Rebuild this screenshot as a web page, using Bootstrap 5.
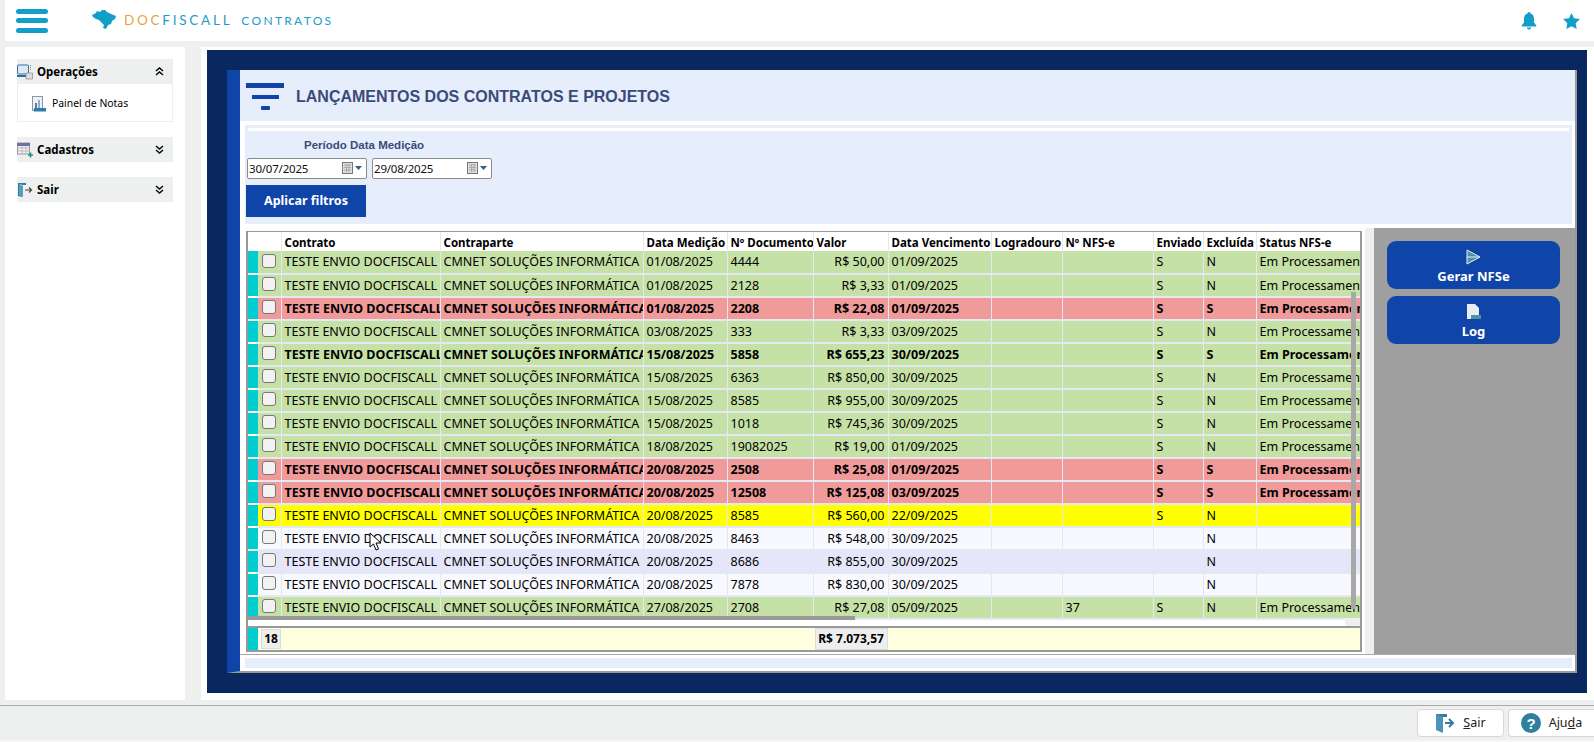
<!DOCTYPE html>
<html lang="pt-BR">
<head>
<meta charset="utf-8">
<title>Contratos</title>
<link href="https://cdn.jsdelivr.net/npm/bootstrap@5.3.0/dist/css/bootstrap.min.css" rel="stylesheet">
<style>
html,body{height:742px;overflow:hidden}
body{background:#eef0ef;font-family:"Noto Sans","Liberation Sans",sans-serif;color:#000}
.topbar{height:41px;margin-left:5px;background:#fff;padding-left:11px}
.burger{width:32px;display:flex;flex-direction:column;gap:4.5px}
.burger i{display:block;height:5px;border-radius:3px;background:#119fc9}
.brandmap{margin-left:44px;margin-top:-3px}
.brand{font-family:"Lato","Open Sans",sans-serif;font-size:13.5px;letter-spacing:2.75px;margin-left:8px;color:#1d9cc8}
.brand b{font-weight:400;color:#e8a33d}
.brand2{margin-left:9px;font-size:12px;letter-spacing:2.3px}
.topicons{margin-left:auto;padding-right:14px;gap:26px}
.midrow{height:664px;padding:6px 0 0 5px;gap:16px}
.sidebar{width:180px;height:653px;background:#fff;padding:12px 12px 0}
.sidehead{height:25px;background:#eef0ef;font-weight:700;font-size:11.5px;padding:0 9px 0 0;gap:4px}
.sidehead .chev{margin-left:auto}
.sidebody{height:38px;border:1px solid #eef0ef;border-top:0;padding:2px 0 0 14px;font-size:10.4px;gap:6px;margin-bottom:15px}
.sidegap{margin-top:15px}
.contentw{flex:1;background:#fff;padding:3px 7px 7px 6px;height:653px}
.navyp{height:643px;background:#0a275f;padding:20px 10px 20px 20px}
.innerp{height:603px;background:#fff;border-left:13px solid #0f44a8;border-right:2px solid #999;border-bottom:2px solid #999}
.titleb{height:51px;background:#e6eefb;padding:2px 0 0 6px;gap:12px}
.titleb svg{flex:none}
.titleb h1{margin:0;font-family:"Liberation Sans",sans-serif;font-weight:700;font-size:16px;color:#3b4a7a;padding-top:0}
.filterb{height:99px;margin:4px 3px 0 5px;background:#e6eefb;padding-top:3px}
.filterb .wline{height:3px;background:#fff;margin:0 3px}
.flabel{font-family:"Liberation Sans",sans-serif;font-weight:700;font-size:11.5px;color:#3b4a7a;margin:6px 0 0 59px;height:21px;line-height:14px;padding-top:1px}
.datesr{gap:5px;padding-left:2px}
.datebox{width:120px;height:21px;border:1px solid #8a8a8a;border-radius:2px;background:#fff;padding:0 4px 0 1px;font-size:11.5px;letter-spacing:-.2px;line-height:19px;min-height:0;color:#111}
.datebox svg{margin-left:auto}
.applyb{width:120px;height:32px;margin:6px 0 0 1px;padding:0;background:#0f44a8;border:0;border-radius:0;color:#fff;font-weight:700;font-size:12.5px}
.workr{height:426px;margin-top:4px;padding-left:6px}
.gridbox{width:1116px;height:421px;margin-top:3px;border:2px solid #999;border-top-width:1px;background:#fff;position:relative}
.gridsc{height:396px;overflow:hidden;background:#fff;border-bottom:2px solid #999}
.grid-t{table-layout:fixed;width:1112px;margin:0;font-size:12.5px}
.grid-t>:not(caption)>*>*{padding:0 0 1px 3px;height:23px;white-space:nowrap;overflow:hidden;border:0;border-right:1px solid #e4e8f2;border-bottom:2px solid #e4e8f2;line-height:19px;color:#000;vertical-align:middle}
.grid-t>thead>*>*{height:19px;font-size:11.5px;font-weight:700;line-height:17px;border-bottom:0;padding:1px 0 0 3px}
.grid-t td.tealc,.grid-t>thead th.tealh{padding:0;border-right:0}
.grid-t td.tealc{--bs-table-bg:#00ced1;border-bottom:2px solid #fff;border-right:0}
.grid-t td.chkc{padding:0;text-align:center}
.grid-t td.valc{text-align:right;padding-right:3px;padding-left:0}
.grid-t .form-check-input{width:14px;height:14px;margin:0;border:1px solid #777;border-radius:3px;background-color:#f2f2f2;vertical-align:-1px;display:inline-block}
.rg{--bs-table-bg:#c6e1a6}.rr{--bs-table-bg:#f09a9a}.ry{--bs-table-bg:#ffff00}.rw{--bs-table-bg:#f8f8ff}.rl{--bs-table-bg:#e6e6fa}
.rb td{font-weight:700}
.sbv{position:absolute;left:1103px;top:60px;width:5px;height:317px;background:#a8a8a8}
.sbh{position:absolute;left:0;top:384px;width:607px;height:4px;background:#999}
.sbhtrack{position:absolute;left:1097px;top:386px;width:15px;height:8px;background:#eef0ef}
.cursorp{position:absolute;left:121px;top:300px}
.gridfoot{height:22px;background:#ffffe0;font-size:12px;font-weight:700;position:relative}
.ftl{width:10px;background:#00ced1;flex:none}
.fcount{width:20px;margin:1px 0 1px 3px;background:#eee;border:1px solid #ddd;text-align:center;line-height:18px}
.ftotal{width:73px;margin:0 0 0 534px;background:#eee;border:1px solid #ddd;text-align:right;line-height:19px;padding-right:3px;white-space:nowrap}
.gutterp{width:12px;background:#eef0ef;height:426px;border-left:3px solid #fff}
.graypan{flex:1;background:#9f9f9f;padding:13px 15px 0 13px;height:426px}
.actb{height:48px;width:173px;background:#0f44a8;border:0;border-radius:9px;color:#fff;font-weight:700;font-size:13px;padding:4px 0 0;margin-bottom:7px;line-height:18px;--bs-btn-hover-bg:#0f44a8;--bs-btn-hover-color:#fff}
.actb svg{display:block;margin:0 auto 2px}
.botl{height:1px;background:#aaa}
.band{height:10px;background:#e6eefb;margin:3px 3px 0 5px}
.botbar{height:37px;border-top:1px solid #aaa;border-bottom:2px solid #f6f6f6;padding:3px 0 0 0;justify-content:flex-end;gap:4px}
.botb{height:28px;background:#fff;border:1px solid #d8d8d8;border-radius:4px;font-size:12.5px;padding:0;gap:8px;color:#222}
.botb.b1{width:87px}.botb.b2{width:86px;border-right:0;border-radius:4px 0 0 4px}
</style>
</head>
<body>
<header class="topbar d-flex align-items-center">
  <div class="burger"><i></i><i></i><i></i></div>
  <svg class="brandmap" width="24" height="20" viewBox="0 0 24 20"><path fill="#119fc9" d="M0 6 4 4 5 2 8 3 10 1 13 1 15 3 19 5 24 7 23 10 20 12 19 15 16 16 14 20 11 19 12 16 9 13 7 11 4 10 1 8Z"/></svg>
  <div class="brand"><b>DOC</b>FISCALL</div>
  <div class="brand brand2">CONTRATOS</div>
  <div class="topicons d-flex align-items-center">
    <svg width="16" height="18" viewBox="0 0 16 18"><path fill="#119fc9" d="M8 0a1.600 1.600 0 0 1 1.500 1.600C12 2.300 13 4.400 13 7v3.500l2.300 3v1H.7v-1l2.300-3V7c0-2.600 1-4.700 3.500-5.400A1.600 1.600 0 0 1 8 0ZM5.800 15.500h4.400A2.200 2.200 0 0 1 8 17.600a2.200 2.200 0 0 1-2.200-2.100Z"/></svg>
    <svg width="17" height="16" viewBox="0 0 17 16"><path fill="#119fc9" d="M8.500 0l2.500 5.300 6 .8-4.300 4.100 1 5.800-5.200-2.800L3.300 16l1-5.800L0 6.100l6-.8Z"/></svg>
  </div>
</header>

<div class="midrow d-flex">
  <nav class="sidebar">
    <div class="sidehead d-flex align-items-center">
      <svg width="16" height="16" viewBox="0 0 16 16"><rect x=".5" y="1" width="11" height="9" rx="1" fill="#dfe8f2" stroke="#3b6ea5"/><rect x="0" y="11" width="11" height="2" fill="#2f6d97"/><rect x="9" y="9" width="6.500" height="6" fill="#ddd" stroke="#888" stroke-width=".7"/><path d="M13.500 1v6" stroke="#999" stroke-dasharray="1 1"/></svg>
      <span>Operações</span>
      <svg class="chev" width="9" height="9" viewBox="0 0 9 9"><path d="M1 4 4.500 1 8 4M1 8l3.500-3L8 8" fill="none" stroke="#000" stroke-width="1.400"/></svg>
    </div>
    <div class="sidebody d-flex align-items-center">
      <svg width="14" height="16" viewBox="0 0 14 16"><rect x=".5" y=".5" width="10" height="14" fill="#eef2f6" stroke="#8a97a5"/><rect x="3" y="7" width="2" height="5" fill="#4c86ad"/><rect x="6" y="4" width="2" height="8" fill="#8fb0c6"/><rect x="2" y="12" width="12" height="3.500" fill="#2f7ca5"/></svg>
      <span>Painel de Notas</span>
    </div>
    <div class="sidehead d-flex align-items-center">
      <svg width="16" height="16" viewBox="0 0 16 16"><rect x=".5" y="1" width="12" height="11" fill="#f2f2f2" stroke="#999"/><rect x="0" y="1" width="13" height="3" fill="#6f6fa0"/><path d="M1 6h11M1 9h11M5 4v8M9 4v8" stroke="#bbb"/><path d="M11 13h5M13.500 10.500v5" stroke="#0e9e7d" stroke-width="1.600"/></svg>
      <span>Cadastros</span>
      <svg class="chev" width="9" height="9" viewBox="0 0 9 9"><path d="M1 1l3.500 3L8 1M1 5l3.500 3L8 5" fill="none" stroke="#000" stroke-width="1.400"/></svg>
    </div>
    <div class="sidehead d-flex align-items-center sidegap">
      <svg width="16" height="16" viewBox="0 0 16 16"><path fill="#2f7ca5" d="M1 1h8v2H5L3 2v11l2 1v1L1 14Z"/><path fill="#5a9cc0" d="M2 2l4 2v11l-4-2Z"/><path d="M8 8h6M12 5.500 14.500 8 12 10.500" fill="none" stroke="#444" stroke-width="1.200"/></svg>
      <span>Sair</span>
      <svg class="chev" width="9" height="9" viewBox="0 0 9 9"><path d="M1 1l3.500 3L8 1M1 5l3.500 3L8 5" fill="none" stroke="#000" stroke-width="1.400"/></svg>
    </div>
  </nav>

  <main class="contentw">
    <div class="navyp">
      <div class="innerp">
        <div class="titleb d-flex align-items-center">
          <svg width="38" height="30" viewBox="0 0 38 30"><rect width="38" height="5" y="1" fill="#0f44a8"/><rect x="6" y="13" width="27" height="4" fill="#0f44a8"/><rect x="15" y="24" width="9" height="4" rx="1" fill="#0f44a8"/></svg>
          <h1>LANÇAMENTOS DOS CONTRATOS E PROJETOS</h1>
        </div>
        <section class="filterb">
          <div class="wline"></div>
          <div class="flabel">Período Data Medição</div>
          <div class="datesr d-flex">
            <div class="datebox d-flex align-items-center"><span>30/07/2025</span><svg width="20" height="13" viewBox="0 0 20 13"><rect x=".5" y=".5" width="10" height="11" fill="#ddd" stroke="#777"/><path d="M2 3h7M2 5.500h7M2 8h7M4.500 2v8M7 2v8" stroke="#aaa"/><path d="M13 4h7l-3.500 4Z" fill="#3c5a86"/></svg></div>
            <div class="datebox d-flex align-items-center"><span>29/08/2025</span><svg width="20" height="13" viewBox="0 0 20 13"><rect x=".5" y=".5" width="10" height="11" fill="#ddd" stroke="#777"/><path d="M2 3h7M2 5.500h7M2 8h7M4.500 2v8M7 2v8" stroke="#aaa"/><path d="M13 4h7l-3.500 4Z" fill="#3c5a86"/></svg></div>
          </div>
          <button class="btn applyb" type="button">Aplicar filtros</button>
        </section>

        <div class="workr d-flex">
          <div class="gridbox">
            <div class="gridsc">
              <table class="table grid-t">
                <colgroup><col style="width:10px"><col style="width:23px"><col style="width:159px"><col style="width:203px"><col style="width:84px"><col style="width:86px"><col style="width:75px"><col style="width:103px"><col style="width:71px"><col style="width:91px"><col style="width:50px"><col style="width:53px"><col style="width:104px"></colgroup>
                <thead><tr><th class="tealh"></th><th></th><th>Contrato</th><th>Contraparte</th><th>Data Medição</th><th>Nº Documento</th><th>Valor</th><th>Data Vencimento</th><th>Logradouro</th><th>Nº NFS-e</th><th>Enviado</th><th>Excluída</th><th>Status NFS-e</th></tr></thead>
                <tbody>
                  <tr class="rg"><td class="tealc"></td><td class="chkc"><input class="form-check-input" type="checkbox"></td><td>TESTE ENVIO DOCFISCALL</td><td>CMNET SOLUÇÕES INFORMÁTICA</td><td>01/08/2025</td><td>4444</td><td class="valc">R$ 50,00</td><td>01/09/2025</td><td></td><td></td><td>S</td><td>N</td><td>Em Processamento</td></tr>
                  <tr class="rg"><td class="tealc"></td><td class="chkc"><input class="form-check-input" type="checkbox"></td><td>TESTE ENVIO DOCFISCALL</td><td>CMNET SOLUÇÕES INFORMÁTICA</td><td>01/08/2025</td><td>2128</td><td class="valc">R$ 3,33</td><td>01/09/2025</td><td></td><td></td><td>S</td><td>N</td><td>Em Processamento</td></tr>
                  <tr class="rr rb"><td class="tealc"></td><td class="chkc"><input class="form-check-input" type="checkbox"></td><td>TESTE ENVIO DOCFISCALL</td><td>CMNET SOLUÇÕES INFORMÁTICA</td><td>01/08/2025</td><td>2208</td><td class="valc">R$ 22,08</td><td>01/09/2025</td><td></td><td></td><td>S</td><td>S</td><td>Em Processamento</td></tr>
                  <tr class="rg"><td class="tealc"></td><td class="chkc"><input class="form-check-input" type="checkbox"></td><td>TESTE ENVIO DOCFISCALL</td><td>CMNET SOLUÇÕES INFORMÁTICA</td><td>03/08/2025</td><td>333</td><td class="valc">R$ 3,33</td><td>03/09/2025</td><td></td><td></td><td>S</td><td>N</td><td>Em Processamento</td></tr>
                  <tr class="rg rb"><td class="tealc"></td><td class="chkc"><input class="form-check-input" type="checkbox"></td><td>TESTE ENVIO DOCFISCALL</td><td>CMNET SOLUÇÕES INFORMÁTICA</td><td>15/08/2025</td><td>5858</td><td class="valc">R$ 655,23</td><td>30/09/2025</td><td></td><td></td><td>S</td><td>S</td><td>Em Processamento</td></tr>
                  <tr class="rg"><td class="tealc"></td><td class="chkc"><input class="form-check-input" type="checkbox"></td><td>TESTE ENVIO DOCFISCALL</td><td>CMNET SOLUÇÕES INFORMÁTICA</td><td>15/08/2025</td><td>6363</td><td class="valc">R$ 850,00</td><td>30/09/2025</td><td></td><td></td><td>S</td><td>N</td><td>Em Processamento</td></tr>
                  <tr class="rg"><td class="tealc"></td><td class="chkc"><input class="form-check-input" type="checkbox"></td><td>TESTE ENVIO DOCFISCALL</td><td>CMNET SOLUÇÕES INFORMÁTICA</td><td>15/08/2025</td><td>8585</td><td class="valc">R$ 955,00</td><td>30/09/2025</td><td></td><td></td><td>S</td><td>N</td><td>Em Processamento</td></tr>
                  <tr class="rg"><td class="tealc"></td><td class="chkc"><input class="form-check-input" type="checkbox"></td><td>TESTE ENVIO DOCFISCALL</td><td>CMNET SOLUÇÕES INFORMÁTICA</td><td>15/08/2025</td><td>1018</td><td class="valc">R$ 745,36</td><td>30/09/2025</td><td></td><td></td><td>S</td><td>N</td><td>Em Processamento</td></tr>
                  <tr class="rg"><td class="tealc"></td><td class="chkc"><input class="form-check-input" type="checkbox"></td><td>TESTE ENVIO DOCFISCALL</td><td>CMNET SOLUÇÕES INFORMÁTICA</td><td>18/08/2025</td><td>19082025</td><td class="valc">R$ 19,00</td><td>01/09/2025</td><td></td><td></td><td>S</td><td>N</td><td>Em Processamento</td></tr>
                  <tr class="rr rb"><td class="tealc"></td><td class="chkc"><input class="form-check-input" type="checkbox"></td><td>TESTE ENVIO DOCFISCALL</td><td>CMNET SOLUÇÕES INFORMÁTICA</td><td>20/08/2025</td><td>2508</td><td class="valc">R$ 25,08</td><td>01/09/2025</td><td></td><td></td><td>S</td><td>S</td><td>Em Processamento</td></tr>
                  <tr class="rr rb"><td class="tealc"></td><td class="chkc"><input class="form-check-input" type="checkbox"></td><td>TESTE ENVIO DOCFISCALL</td><td>CMNET SOLUÇÕES INFORMÁTICA</td><td>20/08/2025</td><td>12508</td><td class="valc">R$ 125,08</td><td>03/09/2025</td><td></td><td></td><td>S</td><td>S</td><td>Em Processamento</td></tr>
                  <tr class="ry"><td class="tealc"></td><td class="chkc"><input class="form-check-input" type="checkbox"></td><td>TESTE ENVIO DOCFISCALL</td><td>CMNET SOLUÇÕES INFORMÁTICA</td><td>20/08/2025</td><td>8585</td><td class="valc">R$ 560,00</td><td>22/09/2025</td><td></td><td></td><td>S</td><td>N</td><td></td></tr>
                  <tr class="rw"><td class="tealc"></td><td class="chkc"><input class="form-check-input" type="checkbox"></td><td>TESTE ENVIO DOCFISCALL</td><td>CMNET SOLUÇÕES INFORMÁTICA</td><td>20/08/2025</td><td>8463</td><td class="valc">R$ 548,00</td><td>30/09/2025</td><td></td><td></td><td></td><td>N</td><td></td></tr>
                  <tr class="rl"><td class="tealc"></td><td class="chkc"><input class="form-check-input" type="checkbox"></td><td>TESTE ENVIO DOCFISCALL</td><td>CMNET SOLUÇÕES INFORMÁTICA</td><td>20/08/2025</td><td>8686</td><td class="valc">R$ 855,00</td><td>30/09/2025</td><td></td><td></td><td></td><td>N</td><td></td></tr>
                  <tr class="rw"><td class="tealc"></td><td class="chkc"><input class="form-check-input" type="checkbox"></td><td>TESTE ENVIO DOCFISCALL</td><td>CMNET SOLUÇÕES INFORMÁTICA</td><td>20/08/2025</td><td>7878</td><td class="valc">R$ 830,00</td><td>30/09/2025</td><td></td><td></td><td></td><td>N</td><td></td></tr>
                  <tr class="rg"><td class="tealc"></td><td class="chkc"><input class="form-check-input" type="checkbox"></td><td>TESTE ENVIO DOCFISCALL</td><td>CMNET SOLUÇÕES INFORMÁTICA</td><td>27/08/2025</td><td>2708</td><td class="valc">R$ 27,08</td><td>05/09/2025</td><td></td><td>37</td><td>S</td><td>N</td><td>Em Processamento</td></tr>
                </tbody>
              </table>
            </div>
            <div class="sbv"></div>
            <div class="sbh"></div>
            <div class="sbhtrack"></div>
            <svg class="cursorp" width="13" height="20" viewBox="0 0 13 20"><path d="M1 1v14l3.500-3 2.500 6 2.500-1-2.500-6h5Z" fill="#fff" stroke="#000"/></svg>
            <div class="gridfoot d-flex">
              <div class="ftl"></div>
              <div class="fcount">18</div>
              <div class="ftotal">R$ 7.073,57</div>
            </div>
          </div>
          <div class="gutterp"></div>
          <aside class="graypan">
            <button class="btn actb d-block" type="button"><svg width="15" height="16" viewBox="0 0 15 16"><path d="M1 1l13 7-13 7Z" fill="#4f93a8" stroke="#e6eefb"/><path d="M1 8h12" stroke="#e6eefb"/></svg>Gerar NFSe</button>
            <button class="btn actb d-block" type="button"><svg width="15" height="16" viewBox="0 0 15 16"><path d="M1 0h8l4 4v11H1Z" fill="#e9edf2"/><rect x="5" y="11" width="10" height="4" fill="#4f93a8"/></svg>Log</button>
          </aside>
        </div>
        <div class="botl"></div>
        <div class="band"></div>
      </div>
    </div>
  </main>
</div>

<footer class="botbar d-flex">
  <button class="btn botb b1 d-flex align-items-center justify-content-center" type="button"><svg width="20" height="22" viewBox="0 0 20 22"><path fill="#2f7ca5" d="M1 2h11v3H5v12h2v3L1 17Z"/><path fill="#4c93b5" d="M1 2l7 3v16l-7-3Z"/><path d="M10 11h7M14 7l4 4-4 4" fill="none" stroke="#2f7ca5" stroke-width="2"/></svg><span><u>S</u>air</span></button>
  <button class="btn botb b2 d-flex align-items-center justify-content-center" type="button"><svg width="20" height="20" viewBox="0 0 20 20"><circle cx="10" cy="10" r="10" fill="#2f7f9f"/><text x="10" y="15.500" text-anchor="middle" font-family="Liberation Sans" font-weight="700" font-size="15" fill="#fff">?</text></svg><span>Aju<u>d</u>a</span></button>
</footer>
<script src="https://cdn.jsdelivr.net/npm/bootstrap@5.3.0/dist/js/bootstrap.bundle.min.js"></script>
</body>
</html>
